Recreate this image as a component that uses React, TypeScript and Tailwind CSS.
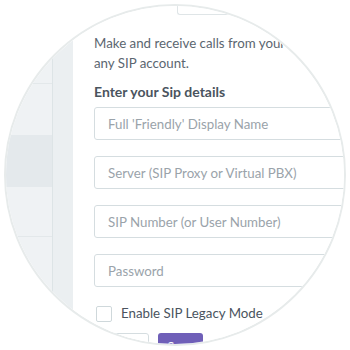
const FIELDS = [
  "Full 'Friendly' Display Name",
  'Server (SIP Proxy or Virtual PBX)',
  'SIP Number (or User Number)',
  'Password',
]

export default function App() {
  return (
    <div className="w-[350px] h-[350px] bg-white pt-[4px] pl-[4px]" style={{ fontFamily: 'Lato, "Liberation Sans", sans-serif' }}>
      {/* magnifier circle */}
      <div className="w-[342px] h-[342px] rounded-full overflow-hidden border-2 border-[#e7ebeb]">
        <div className="w-[350px] h-[350px] -mt-[6px] -ml-[6px] flex">
          {/* sidebar */}
          <div className="w-[53px] shrink-0 bg-[#eff2f4] border-r border-[#dde4e6] flex flex-col">
            <div className="h-[84px] border-b border-[#e3e8ea]" />
            <div className="h-[51px]" />
            <div className="h-[52px] bg-[#e4e9ec]" />
            <div className="h-[50px] border-b border-[#e3e8ea]" />
          </div>
          <div className="w-[20px] shrink-0 bg-[#ebeff1]" />

          {/* main */}
          <div className="flex-1 bg-white pl-[21px] flex flex-col">
            <div className="ml-[83px] w-[260px] h-[15px] shrink-0 border-l border-b border-[#dfe5e7] rounded-bl-[3px]" />
            <p className="mt-[18px] text-[13.3px] leading-[20px] text-[#5b6670] whitespace-nowrap">
              Make and receive calls from your browser using<br />any SIP account.
            </p>
            <h3 className="mt-[9px] text-[14px] leading-[20px] font-bold text-[#4a545e]">Enter your Sip details</h3>
            <div className="mt-[5px] flex flex-col gap-[16px]">
              {FIELDS.map(f => (
                <input
                  key={f}
                  type={f === 'Password' ? 'password' : 'text'}
                  placeholder={f}
                  className="w-[300px] h-[33px] shrink-0 border border-[#d5dde0] rounded-[3px] px-[13px] text-[13.3px] text-[#4a545e] placeholder:text-[#9aa3aa] outline-none"
                />
              ))}
            </div>
            <label className="mt-[17px] ml-[2px] h-[20px] flex items-center gap-[9px] text-[13.3px] text-[#4a545e]">
              <span className="w-[16px] h-[16px] border border-[#cfd8db] rounded-[2px] bg-white" />
              Enable SIP Legacy Mode
            </label>
            <div className="mt-[9px] flex gap-[9px] ml-[10px]">
              <button className="w-[45px] h-[30px] border border-[#d5dde0] rounded-[3px] bg-white text-[13px] text-[#5b6670]">Back</button>
              <button className="w-[45px] h-[30px] rounded-[3px] bg-[#6f5fb8] text-[13px] text-white">Save</button>
            </div>
          </div>
        </div>
      </div>
    </div>
  )
}
